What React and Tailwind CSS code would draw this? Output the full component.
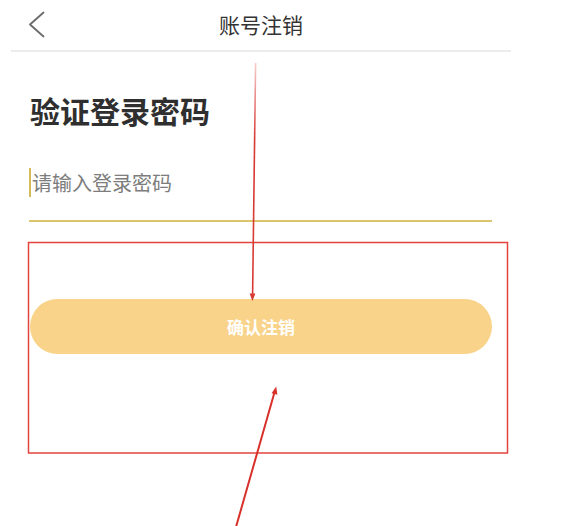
import React from "react";

const cjk = { fontFamily: '"Noto Sans CJK SC", "Noto Sans", sans-serif' };

function Annotations() {
  return (
    <svg
      className="absolute inset-0 pointer-events-none"
      width="565"
      height="526"
      viewBox="0 0 565 526"
    >
      <defs>
        <linearGradient id="fade" x1="0" y1="63" x2="0" y2="140" gradientUnits="userSpaceOnUse">
          <stop offset="0" stopColor="#d83a34" stopOpacity="0.25" />
          <stop offset="1" stopColor="#d83a34" stopOpacity="1" />
        </linearGradient>
      </defs>
      <rect x="28.5" y="242.5" width="479" height="210.5" fill="none" stroke="#e4433d" strokeWidth="1.5" />
      <line x1="255.6" y1="63" x2="252.6" y2="295" stroke="url(#fade)" strokeWidth="1.6" />
      <polygon points="252.4,301 249.6,293.5 255.4,293.6" fill="#d83a34" />
      <line x1="236" y1="527" x2="274.6" y2="392" stroke="#d8302b" strokeWidth="2" />
      <polygon points="276.2,386.5 277.4,394.8 271.6,393.2" fill="#d8302b" />
    </svg>
  );
}

export default function App() {
  return (
    <div className="relative w-[565px] h-[526px] bg-white overflow-hidden" style={cjk}>
      <div className="ml-[11px] w-[500px] h-[52px] border-b-2 border-[#ececec] grid grid-cols-[1fr_auto_1fr] items-center">
        <div className="flex items-center pl-[17px]">
          <svg width="18" height="28" viewBox="0 0 18 28">
            <polyline points="15.5,1.5 2,13.5 15.5,25.5" fill="none" stroke="#6b6b6b" strokeWidth="1.8" strokeLinecap="round" strokeLinejoin="round" />
          </svg>
        </div>
        <div className="text-[21px] leading-[21px] text-[#333333] pb-[2px]">账号注销</div>
        <div />
      </div>

      <div className="ml-[29px] w-[463px] flex flex-col">
        <h1 className="mt-[43px] ml-[1px] text-[30px] leading-[30px] font-bold text-[#2f2f2f]">验证登录密码</h1>
        <div className="mt-[43px] h-[29px] flex items-center">
          <div className="w-[2px] h-[29px] bg-[#d6bb5c]" />
          <span className="text-[20px] leading-[20px] text-[#7d7d7d] ml-[1px]">请输入登录密码</span>
        </div>
        <div className="mt-[23px] h-[2px] bg-[#dcc56c]" />
        <button className="mt-[77px] ml-[1px] h-[55px] rounded-full bg-[#f9d38a] flex items-center justify-center text-white text-[17px] font-bold leading-[17px]">
          确认注销
        </button>
      </div>

      <Annotations />
    </div>
  );
}
